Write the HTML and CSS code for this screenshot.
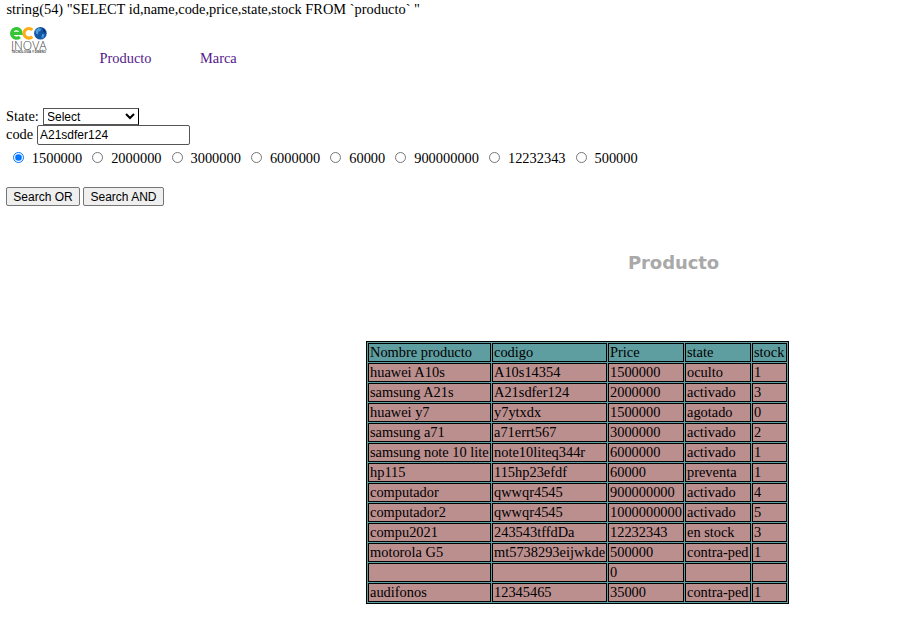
FILE: index.html
```html
<!DOCTYPE html>
<html lang="es">
<head>
<meta charset="utf-8">
<title>Producto</title>
<link rel="stylesheet" href="styles.css">
</head>
<body>
<div class="dump">string(54) "SELECT id,name,code,price,state,stock FROM `producto` "</div>
<header class="top">
  <svg class="logo" width="38" height="30" viewBox="0 0 38 30">
    <g fill="none" stroke-width="3.2">
      <path d="M2 7.4H11.2A4.8 4.8 0 1 0 9.8 10.8" stroke="#35c535"/>
      <path d="M22.3 4A4.8 4.8 0 1 0 22.3 10.6" stroke="#ffad16"/>
    </g>
    <circle cx="30.4" cy="7.2" r="6.3" fill="#1456a6"/>
    <path d="M25.5 4.2l3-2.2 3 .8-1.2 2.2-2 .8-.2 3-2.2-1.2zM32 8l2.5.5-1 3-2 .7z" fill="#4d9ad6"/>
    <path d="M32 2l3 2 .8 3-2-.7z" fill="#0b3268"/>
    <text class="name" x="1" y="23.6" textLength="35.5" lengthAdjust="spacingAndGlyphs">INOVA</text>
    <text class="tagline" x="1.5" y="27.2" textLength="34.5" lengthAdjust="spacingAndGlyphs">TECNOLOGIA Y DISEÑO</text>
  </svg>
  <nav class="menu"><a href="#">Producto</a><a href="#">Marca</a></nav>
</header>
<form>
  <div class="field state"><label for="state">State:</label><select id="state"><option>Select</option></select></div>
  <div class="field code"><label for="code">code</label><input id="code" type="text" value="A21sdfer124"></div>
  <div class="prices">
    <label><input type="radio" name="price" checked>1500000</label>
    <label><input type="radio" name="price">2000000</label>
    <label><input type="radio" name="price">3000000</label>
    <label><input type="radio" name="price">6000000</label>
    <label><input type="radio" name="price">60000</label>
    <label><input type="radio" name="price">900000000</label>
    <label><input type="radio" name="price">12232343</label>
    <label><input type="radio" name="price">500000</label>
  </div>
  <div class="actions"><button type="button" class="or">Search OR</button><button type="button" class="and">Search AND</button></div>
</form>
<h1>Producto</h1>
<table>
  <colgroup><col class="c-name"><col class="c-code"><col class="c-price"><col class="c-state"><col class="c-stock"></colgroup>
  <thead><tr><td>Nombre producto</td><td>codigo</td><td>Price</td><td>state</td><td>stock</td></tr></thead>
  <tbody>
  <tr><td>huawei A10s</td><td>A10s14354</td><td>1500000</td><td>oculto</td><td>1</td></tr>
  <tr><td>samsung A21s</td><td>A21sdfer124</td><td>2000000</td><td>activado</td><td>3</td></tr>
  <tr><td>huawei y7</td><td>y7ytxdx</td><td>1500000</td><td>agotado</td><td>0</td></tr>
  <tr><td>samsung a71</td><td>a71errt567</td><td>3000000</td><td>activado</td><td>2</td></tr>
  <tr><td>samsung note 10 lite</td><td>note10liteq344r</td><td>6000000</td><td>activado</td><td>1</td></tr>
  <tr><td>hp115</td><td>115hp23efdf</td><td>60000</td><td>preventa</td><td>1</td></tr>
  <tr><td>computador</td><td>qwwqr4545</td><td>900000000</td><td>activado</td><td>4</td></tr>
  <tr><td>computador2</td><td>qwwqr4545</td><td>1000000000</td><td>activado</td><td>5</td></tr>
  <tr><td>compu2021</td><td>243543tffdDa</td><td>12232343</td><td>en stock</td><td>3</td></tr>
  <tr><td>motorola G5</td><td>mt5738293eijwkde</td><td>500000</td><td>contra-ped</td><td>1</td></tr>
  <tr><td></td><td></td><td>0</td><td></td><td></td></tr>
  <tr><td>audifonos</td><td>12345465</td><td>35000</td><td>contra-ped</td><td>1</td></tr>
  </tbody>
</table>
</body>
</html>
```
FILE: styles.css
```css
* { box-sizing: border-box; }
body {
  margin: 0;
  padding: 1px 0 0 6px;
  background: #fff;
  color: #000;
  font: 14.4px/17px "Liberation Serif", "Times New Roman", serif;
}
.dump { height: 17px; padding-left: 0.4px; white-space: nowrap; }
.top { display: flex; height: 90px; padding: 8px 0 0 4px; }
.logo { flex: none; overflow: visible; }
.logo .name { font: 300 12.5px "Open Sans", sans-serif; fill: #444; }
.logo .tagline { font: bold 3px "Liberation Sans", sans-serif; fill: #444; }
.menu { display: flex; gap: 48.5px; margin: 24px 0 0 51.5px; }
.menu a { color: #551a8b; text-decoration: none; }
.field { display: flex; align-items: center; white-space: nowrap; }
.state { height: 17px; }
.code { height: 20px; }
.state label { width: 37px; }
.code label { width: 31px; line-height: 16px; padding-bottom: 2px; }
select {
  width: 96px;
  height: 17px;
  margin: 0;
  padding: 0;
  border: 1px solid #555;
  border-right-color: #000;
  border-radius: 0;
  background: #fff;
  color: #000;
  font: 12px "Liberation Sans", Arial, sans-serif;
  text-indent: -1px;
}
.code input {
  width: 153px;
  height: 20px;
  margin: 0;
  padding: 0 2px;
  border: 1px solid #555;
  border-radius: 2px;
  color: #000;
  font: 12px "Liberation Sans", Arial, sans-serif;
}
.prices { display: flex; gap: 10.2px; margin-top: 5px; padding-left: 7px; height: 17px; }
.prices label { display: flex; align-items: center; white-space: nowrap; }
.prices input { width: 11px; height: 11px; margin: 0 7.8px 2px 0; }
.actions { display: flex; gap: 3px; margin-top: 20px; }
button {
  height: 19px;
  padding: 0;
  border: 1px solid #767676;
  border-radius: 2px;
  background: #efefef;
  color: #000;
  font: 12px "Liberation Sans", Arial, sans-serif;
}
.or { width: 74px; }
.and { width: 81px; }
h1 {
  margin: 45px 0 0 622px;
  height: 24px;
  color: #a9a9a9;
  font: bold 18px/24px "DejaVu Sans", Verdana, sans-serif;
  letter-spacing: -0.1px;
}
table {
  width: 423px;
  margin: 66px 0 0 360px;
  table-layout: fixed;
  border: 1px solid #000;
  border-spacing: 1px;
  background: #5f9ea0;
}
td {
  height: 19px;
  padding: 0 1px;
  border: 1px solid #000;
  line-height: 17px;
  white-space: nowrap;
}
tbody td { background: #bc8f8f; }
.c-name { width: 123px; }
.c-code { width: 115px; }
.c-price { width: 76px; }
.c-state { width: 66px; }
.c-stock { width: 35px; }
```
